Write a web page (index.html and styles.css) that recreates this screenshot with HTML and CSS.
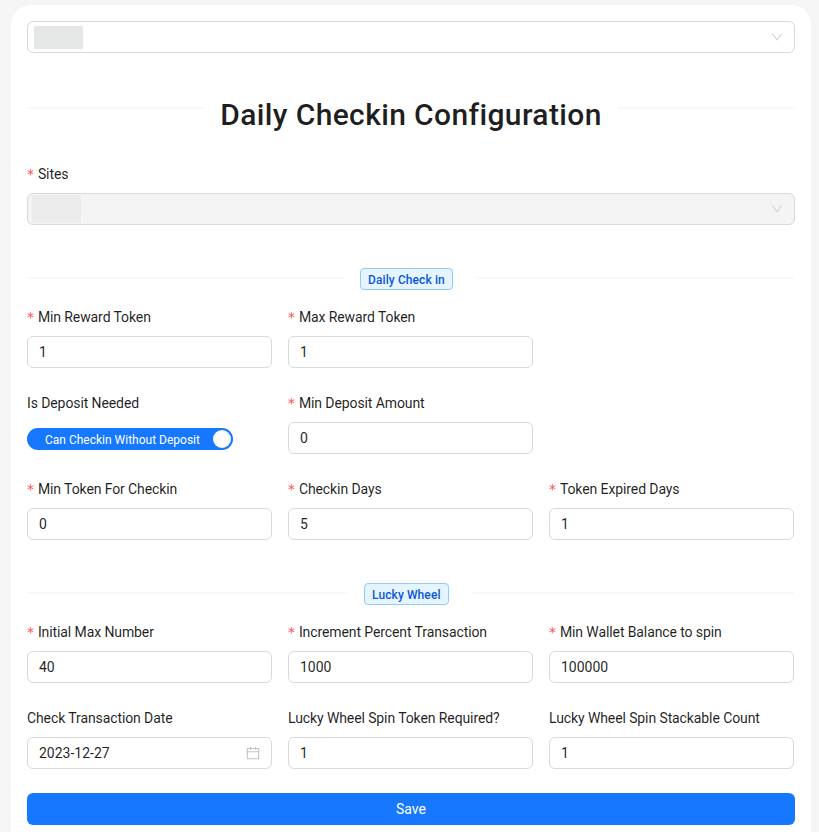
FILE: index.html
```html
<!DOCTYPE html>
<html lang="en">
<head>
  <meta charset="UTF-8">
  <title>Daily Checkin Configuration</title>
  <link rel="stylesheet" href="styles.css">
</head>
<body>
  <div class="card">
    <div class="select">
      <span class="blur"></span>
      <svg class="arrow" viewBox="64 64 896 896"><path d="M884 256h-75c-5.1 0-9.9 2.5-12.9 6.6L512 654.2 227.9 262.6c-3-4.1-7.8-6.6-12.9-6.6h-75c-6.5 0-10.3 7.4-6.5 12.7l352.6 486.1c12.8 17.6 39 17.6 51.7 0l352.6-486.1c3.9-5.3.1-12.7-6.4-12.7z"/></svg>
    </div>

    <div class="title-divider">
      <h1>Daily Checkin Configuration</h1>
    </div>

    <div class="field sites">
      <label><i>*</i>Sites</label>
      <div class="select disabled">
        <span class="blur"></span>
        <svg class="arrow" viewBox="64 64 896 896"><path d="M884 256h-75c-5.1 0-9.9 2.5-12.9 6.6L512 654.2 227.9 262.6c-3-4.1-7.8-6.6-12.9-6.6h-75c-6.5 0-10.3 7.4-6.5 12.7l352.6 486.1c12.8 17.6 39 17.6 51.7 0l352.6-486.1c3.9-5.3.1-12.7-6.4-12.7z"/></svg>
      </div>
    </div>

    <div class="divider daily"><span class="tag">Daily Check in</span></div>
    <div class="grid">
      <div class="field"><label><i>*</i>Min Reward Token</label><input value="1"></div>
      <div class="field"><label><i>*</i>Max Reward Token</label><input value="1"></div>
      <div class="empty"></div>

      <div class="field">
        <label>Is Deposit Needed</label>
        <div class="toggle"><span>Can Checkin Without Deposit</span><b></b></div>
      </div>
      <div class="field"><label><i>*</i>Min Deposit Amount</label><input value="0"></div>
      <div class="empty"></div>

      <div class="field"><label><i>*</i>Min Token For Checkin</label><input value="0"></div>
      <div class="field"><label><i>*</i>Checkin Days</label><input value="5"></div>
      <div class="field"><label><i>*</i>Token Expired Days</label><input value="1"></div>
    </div>

    <div class="divider lucky"><span class="tag">Lucky Wheel</span></div>
    <div class="grid">
      <div class="field"><label><i>*</i>Initial Max Number</label><input value="40"></div>
      <div class="field"><label><i>*</i>Increment Percent Transaction</label><input value="1000"></div>
      <div class="field"><label><i>*</i>Min Wallet Balance to spin</label><input value="100000"></div>

      <div class="field">
        <label>Check Transaction Date</label>
        <div class="date">
          <span>2023-12-27</span>
          <svg viewBox="64 64 896 896"><path d="M880 184H712v-64c0-4.4-3.6-8-8-8h-56c-4.4 0-8 3.6-8 8v64H384v-64c0-4.4-3.6-8-8-8h-56c-4.4 0-8 3.6-8 8v64H144c-17.7 0-32 14.3-32 32v664c0 17.7 14.3 32 32 32h736c17.7 0 32-14.3 32-32V216c0-17.7-14.3-32-32-32zm-40 656H184V460h656v380zM184 392V256h128v48c0 4.4 3.6 8 8 8h56c4.4 0 8-3.6 8-8v-48h256v48c0 4.4 3.6 8 8 8h56c4.4 0 8-3.6 8-8v-48h128v136H184z"/></svg>
        </div>
      </div>
      <div class="field"><label>Lucky Wheel Spin Token Required?</label><input value="1"></div>
      <div class="field"><label>Lucky Wheel Spin Stackable Count</label><input value="1"></div>
    </div>

    <button class="save">Save</button>
  </div>
</body>
</html>
```

FILE: styles.css
```css
html, body {
  height: 832px;
  overflow: hidden;
}

body {
  margin: 0;
  background: #f5f5f5;
  font-family: Roboto, "Noto Sans", Arial, sans-serif;
  font-size: 14px;
  color: rgba(0, 0, 0, 0.88);
}

* {
  box-sizing: border-box;
}

.card {
  width: 800px;
  height: 827px;
  margin: 5px 0 0 11px;
  padding: 16px 16px 0;
  background: white;
  border-radius: 20px 20px 0 0;
}

.select {
  display: flex;
  align-items: center;
  justify-content: space-between;
  height: 32px;
  width: 768px;
  padding: 0 11px 0 6px;
  border: 1px solid #d9d9d9;
  border-radius: 6px;
  background: white;
}

.select.disabled {
  background: #f4f4f4;
  padding-left: 4px;
}

.blur {
  width: 49px;
  height: 23px;
  background: #e5e6e6;
}

.disabled .blur {
  height: 28px;
  background: #ececec;
}

.arrow {
  width: 12px;
  height: 12px;
  fill: #cfcfcf;
}

.title-divider {
  display: flex;
  align-items: center;
  gap: 16px;
  width: 768px;
  height: 38px;
  margin-top: 43px;
  margin-bottom: 29px;
}

.title-divider:before,
.title-divider:after {
  content: "";
  flex: 1;
  height: 2px;
  background: #f8f8f8;
  margin-top: -14px;
}

h1 {
  margin: 0;
  font-size: 30px;
  font-weight: 500;
  line-height: 38px;
  letter-spacing: 0.37px;
  color: rgba(0, 0, 0, 0.88);
}

.field {
  display: flex;
  flex-direction: column;
}

.field label {
  height: 22px;
  line-height: 22px;
  margin-bottom: 8px;
  letter-spacing: -0.1px;
  white-space: nowrap;
}

.field i {
  font-style: normal;
  color: #ff4d4f;
  margin-right: 4px;
  font-family: SimSun, "DejaVu Sans", sans-serif;
}

.sites {
  width: 768px;
  margin-bottom: 43px;
}

.divider {
  display: flex;
  align-items: center;
  gap: 16px;
  width: 767px;
  margin-bottom: 16px;
}

.divider:before,
.divider:after {
  content: "";
  flex: 1;
  height: 2px;
  margin-top: -2px;
  background: #f8f8f8;
}

.divider:after {
  margin-left: 8px;
}

.daily:before {
  flex: none;
  width: 317px;
}

.lucky {
  margin-top: 43px;
}

.lucky:before {
  flex: none;
  width: 321px;
}

.tag {
  padding: 0 7px;
  height: 22px;
  line-height: 22px;
  font-size: 12px;
  font-weight: 500;
  letter-spacing: 0.1px;
  color: #0958d9;
  background: #e6f4ff;
  border: 1px solid #91caff;
  border-radius: 4px;
  white-space: nowrap;
}

.grid {
  display: grid;
  grid-template-columns: repeat(3, 245px);
  column-gap: 16px;
  row-gap: 24px;
}

input,
.date {
  width: 245px;
  height: 32px;
  padding: 0 11px;
  border: 1px solid #d9d9d9;
  border-radius: 6px;
  background: white;
  font-family: inherit;
  font-size: 14px;
  color: rgba(0, 0, 0, 0.88);
}

.date {
  display: flex;
  align-items: center;
  justify-content: space-between;
}

.date svg {
  width: 14px;
  height: 14px;
  fill: #c4c4c4;
}

.toggle {
  display: flex;
  align-items: center;
  justify-content: space-between;
  width: 206px;
  height: 22px;
  margin-top: 6px;
  padding: 0 2px 0 18px;
  border-radius: 11px;
  background: #1677ff;
  color: white;
  font-size: 12px;
}

.toggle span {
  margin-top: 1px;
}

.toggle b {
  width: 18px;
  height: 18px;
  border-radius: 50%;
  background: white;
}

.save {
  display: block;
  width: 768px;
  height: 32px;
  margin-top: 24px;
  border: 0;
  border-radius: 6px;
  background: #1677ff;
  color: white;
  font-family: inherit;
  font-size: 14px;
}
```
